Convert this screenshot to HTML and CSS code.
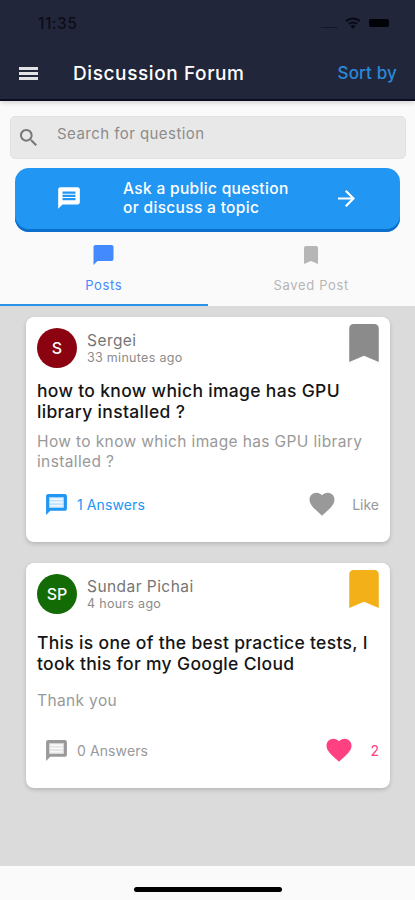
FILE: index.html
```html
<!DOCTYPE html>
<html lang="en">
<head>
<meta charset="utf-8">
<meta name="viewport" content="width=device-width, initial-scale=1">
<title>Discussion Forum</title>
<link rel="stylesheet" href="styles.css">
</head>
<body>
<svg class="defs" width="0" height="0" aria-hidden="true">
  <symbol id="message" viewBox="0 0 24 24"><path d="M20 2H4c-1.1 0-1.99.9-1.99 2L2 22l4-4h14c1.1 0 2-.9 2-2V4c0-1.1-.9-2-2-2zm-2 12H6v-2h12v2zm0-3H6V9h12v2zm0-3H6V6h12v2z"/></symbol>
  <symbol id="message-light" viewBox="0 0 24 24"><path d="M20 2H4c-1.1 0-1.99.9-1.99 2L2 22l4-4h14c1.1 0 2-.9 2-2V4c0-1.1-.9-2-2-2zM5 5h14v10H5z" fill-rule="evenodd"/><path d="M5 5h14v10H5z" opacity=".28"/><path d="M6 6h12v1.6H6zm0 3.2h12v1.6H6zm0 3.2h12V14H6z" fill="#fff" opacity=".75"/></symbol>
  <symbol id="bookmark" viewBox="5 3 14 18"><path d="M17 3H7c-1.1 0-1.99.9-1.99 2L5 21l7-3 7 3V5c0-1.1-.9-2-2-2z"/></symbol>
  <symbol id="heart" viewBox="0 0 24 24"><path d="M12 21.35l-1.45-1.32C5.4 15.36 2 12.28 2 8.5 2 5.42 4.42 3 7.5 3c1.74 0 3.41.81 4.5 2.09C13.09 3.81 14.76 3 16.5 3 19.58 3 22 5.42 22 8.5c0 3.78-3.4 6.86-8.55 11.54L12 21.35z"/></symbol>
</svg>
<div class="app">
  <header class="header">
    <div class="status">
      <span class="time">11:35</span>
      <span class="signal"></span>
      <svg class="wifi" viewBox="0 0 16 12"><g fill="none" stroke="#090b14" stroke-width="2"><path d="M1 4.3a10 10 0 0 1 14 0"/><path d="M3.8 7.1a6 6 0 0 1 8.4 0"/></g><path d="M8 12L5.4 9.2a3.8 3.8 0 0 1 5.2 0z" fill="#090b14"/></svg>
      <span class="battery"></span>
    </div>
    <div class="nav">
      <span class="menu"><i></i><i></i><i></i></span>
      <h1 class="title">Discussion Forum</h1>
      <span class="sort">Sort by</span>
    </div>
  </header>
  <div class="search">
    <svg viewBox="3 3 17.5 17.5"><path d="M15.5 14h-.79l-.28-.27C15.41 12.59 16 11.11 16 9.5 16 5.91 13.09 3 9.5 3S3 5.91 3 9.5 5.91 16 9.5 16c1.61 0 3.09-.59 4.23-1.57l.27.28v.79l5 4.99L20.49 19l-4.99-5zm-6 0C7.01 14 5 11.99 5 9.5S7.01 5 9.5 5 14 7.01 14 9.5 11.99 14 9.5 14z"/></svg>
    <span>Search for question</span>
  </div>
  <div class="ask">
    <svg class="ask-icon"><use href="#message"/></svg>
    <p class="ask-text">Ask a public question<br>or discuss a topic</p>
    <svg class="arrow" viewBox="4 4 16 16"><path d="M12 4l-1.41 1.41L16.17 11H4v2h12.17l-5.58 5.59L12 20l8-8z"/></svg>
  </div>
  <nav class="tabs">
    <div class="tab active">
      <svg viewBox="2 2 20 20"><path d="M20 2H4c-1.1 0-2 .9-2 2v18l4-4h14c1.1 0 2-.9 2-2V4c0-1.1-.9-2-2-2z"/></svg>
      <span class="posts">Posts</span>
    </div>
    <div class="tab">
      <svg><use href="#bookmark"/></svg>
      <span class="saved">Saved Post</span>
    </div>
  </nav>
  <main class="feed">
    <article class="card">
      <div class="author">
        <span class="avatar">S</span>
        <div class="who"><span class="name">Sergei</span><span class="ago">33 minutes ago</span></div>
        <svg class="mark"><use href="#bookmark"/></svg>
      </div>
      <h2 class="question">how to know which image has GPU<br>library installed ?</h2>
      <p class="detail">How to know which image has GPU library<br>installed ?</p>
      <div class="actions blue">
        <svg class="msg"><use href="#message-light"/></svg>
        <span class="answers">1 Answers</span>
        <svg class="heart"><use href="#heart"/></svg>
        <span class="like">Like</span>
      </div>
    </article>
    <article class="card second">
      <div class="author">
        <span class="avatar green">SP</span>
        <div class="who"><span class="name">Sundar Pichai</span><span class="ago">4 hours ago</span></div>
        <svg class="mark gold"><use href="#bookmark"/></svg>
      </div>
      <h2 class="question">This is one of the best practice tests, I<br>took this for my Google Cloud</h2>
      <p class="detail">Thank you</p>
      <div class="actions liked">
        <svg class="msg"><use href="#message-light"/></svg>
        <span class="answers">0 Answers</span>
        <svg class="heart"><use href="#heart"/></svg>
        <span class="like">2</span>
      </div>
    </article>
  </main>
  <footer class="home"><span></span></footer>
</div>
</body>
</html>
```
FILE: styles.css
```css
* { box-sizing: border-box; margin: 0; padding: 0; }
body { font-family: Inter, "Liberation Sans", sans-serif; background: #fafafa; overflow: hidden; }
svg { display: block; fill: currentColor; flex: none; }
.defs { position: absolute; }
.app { width: 415px; height: 900px; display: flex; flex-direction: column; background: #fafafa; }
span, h1, h2, p { white-space: nowrap; }

.header { height: 101px; flex: none; background: #22263b; border-bottom: 2px solid #0b0d20; box-shadow: 0 1px 6px rgba(0,0,0,.2); }
.status { height: 46px; display: flex; align-items: center; padding: 0 24px 0 38px; color: #0b0d17; }
.time { flex: 1; font-size: 15.5px; font-weight: 500; letter-spacing: .5px; }
.signal { width: 17px; height: 1px; background: #151828; margin: 8px 7px 0 0; }
.wifi { width: 16px; height: 12px; margin-right: 8px; }
.battery { width: 20px; height: 8px; border-radius: 2px; background: #020307; margin-right: 2px; }
.nav { height: 53px; display: flex; align-items: center; padding: 1px 18px 0 19px; color: #fff; }
.menu { width: 19px; display: flex; flex-direction: column; gap: 2px; margin-right: 35px; }
.menu i { height: 3px; background: #e2e1e4; }
.title { flex: 1; font-size: 19px; font-weight: 500; letter-spacing: .6px; }
.sort { font-size: 17px; font-weight: 500; letter-spacing: .15px; color: #2b89d6; }

.search { height: 43px; flex: none; margin: 15px 9px 0 10px; padding: 0 9px; display: flex; align-items: center; background: #e8e8e8; border: 1px solid #e2e2e2; border-radius: 5px; color: #8c8c8c; font-size: 15px; letter-spacing: .45px; }
.search svg { width: 17px; height: 17px; margin: 0 20px 0 0; color: #777; }
.search span { padding-bottom: 8px; }

.ask { height: 64px; flex: none; margin: 9px 15px 0; padding: 0 45px 4px 41px; display: flex; align-items: center; background: #2196f3; border-radius: 14px; box-shadow: inset 0 -3px 0 #0b6fcb; color: #fff; }
.ask-icon { width: 26px; height: 26px; margin-right: 41px; }
.ask-text { flex: 1; font-size: 15.5px; font-weight: 500; line-height: 19px; letter-spacing: .33px; }
.arrow { width: 17px; height: 17px; }

.tabs { height: 74px; flex: none; display: flex; }
.tab { flex: 1; display: flex; flex-direction: column; align-items: center; padding-top: 13px; color: #b6b6b6; font-size: 13px; letter-spacing: .65px; }
.tab svg { width: 14px; height: 18px; margin: 1px 0 13px; }
.tab.active { color: #448aff; border-bottom: 2px solid #2b93ea; }
.tab.active svg { width: 21px; height: 20px; margin: 0 0 12px; }

.feed { height: 560px; flex: none; background: #dbdbdb; padding: 11px 25px 0 26px; display: flex; flex-direction: column; gap: 21px; }
.card { height: 225px; padding: 11px 11px 0; background: #fff; border-radius: 8px; box-shadow: 0 2px 4px rgba(0,0,0,.17); display: flex; flex-direction: column; }
.author { height: 40px; display: flex; }
.avatar { width: 40px; height: 40px; border-radius: 50%; background: #8b0210; color: #fff; display: flex; align-items: center; justify-content: center; font-size: 16px; font-weight: 500; margin-right: 10px; }
.avatar.green { background: #126b05; }
.who { flex: 1; display: flex; flex-direction: column; padding-top: 3px; }
.name { font-size: 15.5px; line-height: 19px; letter-spacing: .45px; color: #757575; }
.ago { font-size: 12.5px; line-height: 15px; letter-spacing: .3px; color: #8b8b8b; }
.mark { width: 30px; height: 38px; margin-top: -4px; color: #8b8b8b; }
.mark.gold { color: #f3b019; }
.question { margin-top: 12px; font-size: 17.5px; font-weight: 500; line-height: 21px; letter-spacing: .32px; color: #151515; }
.detail { margin-top: 10px; height: 39px; font-size: 15.5px; line-height: 19.5px; letter-spacing: .37px; color: #999; }
.second .question { margin-top: 18px; }
.second .detail { margin-top: 17px; height: 27px; }
.actions { height: 26px; margin-top: 20px; padding-left: 7px; display: flex; align-items: center; color: #999; font-size: 14px; }
.second .actions { margin-top: 19px; }
.msg { width: 25px; height: 25px; margin-right: 8px; }
.answers { flex: 1; letter-spacing: .1px; }
.blue .msg, .blue .answers { color: #2196f3; }
.heart { width: 30px; height: 30px; margin-right: 15px; }
.liked .heart { margin-right: 16px; }
.liked .heart, .liked .like { color: #ff4081; }

.home { flex: 1; display: flex; justify-content: center; padding-top: 21px; }
.home span { width: 148px; height: 5px; border-radius: 3px; background: #000; }
```
